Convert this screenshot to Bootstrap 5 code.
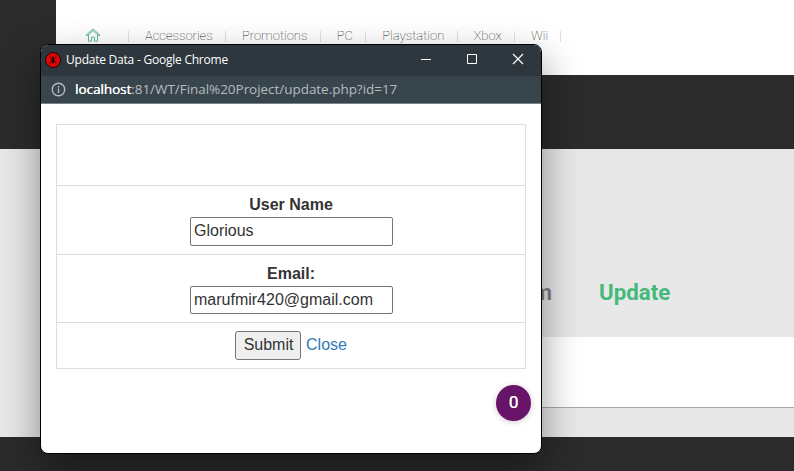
<!DOCTYPE html>
<html lang="en">
<head>
<meta charset="utf-8">
<meta name="viewport" content="width=device-width, initial-scale=1">
<title>Update Data</title>
<link href="https://cdn.jsdelivr.net/npm/bootstrap@5.3.0/dist/css/bootstrap.min.css" rel="stylesheet">
<style>
body{width:794px;height:471px;overflow:hidden;background:#2b2b2b;font-family:"Liberation Sans",Arial,sans-serif;line-height:1.5}
.site{height:471px;font-family:Roboto,sans-serif}
.topnav{margin-left:56px;height:75px;background:#fff;padding:26px 0 0 29px}
.topnav a{height:20px;line-height:20px;font-size:13px;font-weight:100;color:#222;text-decoration:none;white-space:nowrap}
.topnav li{height:20px;display:flex;align-items:center;padding-right:13.300px;margin-right:16px;position:relative}
.topnav li::after{content:"";width:1px;height:11px;background:#eadcdc;position:absolute;right:0;top:5px}
.topnav li.home-item{padding-right:28px}
.topnav li.home-item a{height:16px;margin-bottom:3px}
.band{height:74px;background:#2b2b2b}
.tabs-area{height:188px;background:#e8e8e8;padding:125px 0 0 456px;font-size:22.300px;font-weight:700;line-height:36px;color:#807f85}
.tabs-area .tab-label{width:96px;text-align:right}
.tabs-area .active-tab{color:#45b97c;margin-left:47px}
.lower{background:#e8e8e8;height:100px}
.panel{height:71px;margin-left:56px;background:#fff;border-bottom:1px solid #a9a9a9}
.win{left:40px;top:44px;width:502px;height:410px;border:1px solid #000;border-radius:8px;background:#fff;box-shadow:0 16px 38px rgba(0,0,0,.42);overflow:hidden}
.titlebar{height:31px;background:#2d373d;color:#fff;font:12px "Open Sans","Noto Sans",sans-serif;padding-left:4px}
.titlebar .caption{margin:-2px 0 0 5px;letter-spacing:-.23px}
.controls{padding-right:17px;gap:34px;margin-top:-3px}
.titlebar .logo{margin-top:-2px}
.urlbar{height:28px;background:#39454c;border-bottom:1px solid #76838a;color:#b4bcc0;font:13.500px "Open Sans","Noto Sans",sans-serif;padding-left:10px}
.urlbar svg{margin-top:-1px}
.urlbar b{font-weight:400;color:#fff;text-shadow:.3px 0 #fff}
.urlbar .addr{margin:-2px 0 0 9px;white-space:nowrap;letter-spacing:-.04px}
.form-wrap{padding:20px 15px 0;color:#333;font-size:16px;line-height:23px}
.form-grid{width:470px;border:1px solid #ddd}
.form-grid>div{border-bottom:1px solid #ddd;text-align:center}
.form-grid>div:last-child{border-bottom:0}
.r-blank{height:61px}
.r-name{height:69px;padding-top:7px}
.r-mail{height:68px;padding-top:7px}
.r-act{height:45px;padding-top:8px}
.form-grid label{display:block;font-weight:700;height:24px;line-height:24px}
.form-grid input{display:block;margin:0 0 0 133px;width:203px;height:29px;border:1px solid #767676;border-radius:2px;padding:0 3px 2px;color:#333;outline:0}
.r-mail input{height:28px;padding-bottom:0}
.form-grid button{width:66px;height:29px;border:1px solid #767676;border-radius:3px;background:#efefef;color:#333;padding:0 0 2px 1px}
.form-grid a{color:#337ab7;text-decoration:none;margin-left:5px;line-height:27px}
.count{right:10px;bottom:32px;width:35px;height:36px;background:#681468;color:#fff;font:400 17px/35px Roboto,sans-serif;text-align:center;text-shadow:.3px 0 #fff;box-shadow:0 1px 6px rgba(0,0,0,.2)}
</style>
<script src="https://cdn.jsdelivr.net/npm/bootstrap@5.3.0/dist/js/bootstrap.bundle.min.js"></script>
</head>
<body>
<div class="site">
  <ul class="topnav list-unstyled d-flex mb-0">
    <li class="home-item"><a href="#" aria-label="Home" class="d-flex align-items-center"><svg width="16" height="16" viewBox="0 0 16 16" fill="none" stroke="#62b89c" stroke-width="1"><path d="M1 8 8 2l7 6-1 .8L8 3.700 2 8.800zM3.500 8v6.200h3v-4h3v4h3V8"/></svg></a></li>
    <li><a href="#">Accessories</a></li>
    <li><a href="#">Promotions</a></li>
    <li><a href="#">PC</a></li>
    <li><a href="#">Playstation</a></li>
    <li><a href="#">Xbox</a></li>
    <li><a href="#">Wii</a></li>
  </ul>
  <div class="band"></div>
  <div class="tabs-area d-flex"><span class="tab-label">m</span><span class="active-tab">Update</span></div>
  <div class="lower"><div class="panel"></div></div>
</div>

<div class="win position-absolute">
  <div class="titlebar d-flex align-items-center">
    <svg class="logo" width="16" height="16" viewBox="0 0 16 16"><circle cx="8" cy="8" r="7.500" fill="#e00606" stroke="#280608"/><ellipse cx="8" cy="8.800" rx="1.400" ry="2.600" fill="#200"/><circle cx="8" cy="5.500" r="1" fill="#200"/><path d="M5 3.500 5.300 6 8 7.800 10.700 6l.3-2.500M5 12.300l.5-2.800L8 7.800l2.500 1.700.5 2.800" fill="none" stroke="#400" stroke-width=".8"/></svg>
    <span class="caption">Update Data - Google Chrome</span>
    <div class="controls d-flex align-items-center ms-auto">
      <svg width="12" height="12" viewBox="0 0 12 12" stroke="#fff"><path d="M1 6.500h10"/></svg>
      <svg width="12" height="12" viewBox="0 0 12 12" stroke="#fff" fill="none"><path d="M1.500 1.500h9v9h-9z"/></svg>
      <svg width="12" height="12" viewBox="0 0 12 12" stroke="#fff" stroke-width="1.200"><path d="m1 1 10 10M11 1 1 11"/></svg>
    </div>
  </div>
  <div class="urlbar d-flex align-items-center">
    <svg width="15" height="15" viewBox="0 0 15 15" fill="none" stroke="#b4bcc0" stroke-width="1.400"><circle cx="7.500" cy="7.500" r="6.200"/><path d="M7.500 6.500v4.500M7.500 4v1.400"/></svg>
    <span class="addr"><b>localhost</b>:81/WT/Final%20Project/update.php?id=17</span>
  </div>
  <form class="form-wrap">
    <div class="form-grid">
      <div class="r-blank"></div>
      <div class="r-name"><label for="uname">User Name</label><input id="uname" type="text" value="Glorious"></div>
      <div class="r-mail"><label for="email">Email:</label><input id="email" type="text" value="marufmir420@gmail.com"></div>
      <div class="r-act d-flex justify-content-center align-items-start"><button type="button">Submit</button><a href="#">Close</a></div>
    </div>
  </form>
  <span class="count rounded-circle position-absolute">0</span>
</div>
</body>
</html>
